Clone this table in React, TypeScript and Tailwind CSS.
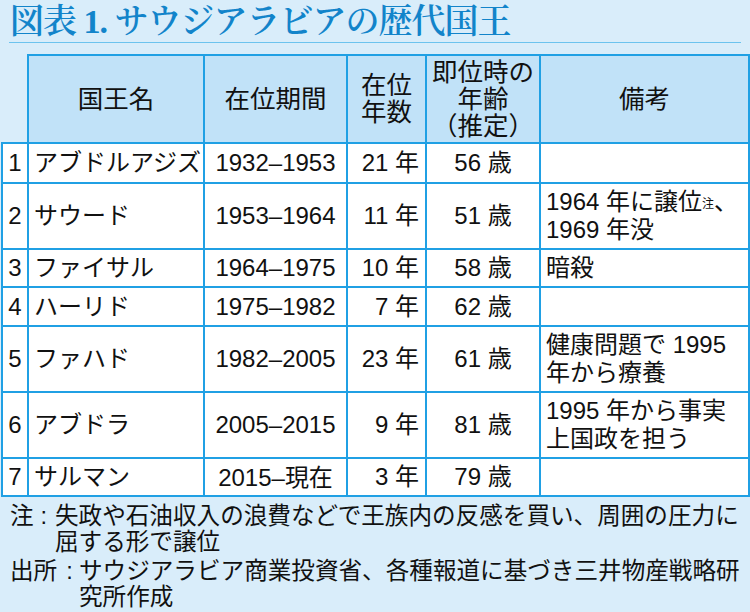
const rows = [
  { n: '1', name: 'アブドルアジズ', period: '1932–1953', years: '21 年', age: '56 歳', note: null, h: 'h-[40px]' },
  { n: '2', name: 'サウード', period: '1953–1964', years: '11 年', age: '51 歳', note: 'saud', h: 'h-[66px]' },
  { n: '3', name: 'ファイサル', period: '1964–1975', years: '10 年', age: '58 歳', note: '暗殺', h: 'h-[38px]' },
  { n: '4', name: 'ハーリド', period: '1975–1982', years: '7 年', age: '62 歳', note: null, h: 'h-[39px]' },
  { n: '5', name: 'ファハド', period: '1982–2005', years: '23 年', age: '61 歳', note: ['健康問題で 1995', '年から療養'], h: 'h-[66px]' },
  { n: '6', name: 'アブドラ', period: '2005–2015', years: '9 年', age: '81 歳', note: ['1995 年から事実', '上国政を担う'], h: 'h-[66px]' },
  { n: '7', name: 'サルマン', period: '2015–', years: '3 年', age: '79 歳', note: null, h: 'h-[38px]', tail: '現在' },
];

// cell border shared by header and body
const cell = 'border-2 border-[#20a0e4] p-0 align-middle';
const jp = "font-['Noto_Sans_CJK_JP',sans-serif]";
const latin = "font-['Liberation_Sans',Arial,sans-serif]";

function Note({ note }: { note: (typeof rows)[number]['note'] }) {
  if (!note) return null;
  if (note === 'saud') {
    return (
      <>
        1964 年に譲位<sup className="text-[12px] relative -top-[2px]">注</sup>、
        <br />
        1969 年没
      </>
    );
  }
  if (Array.isArray(note)) {
    return (
      <>
        {note[0]}
        <br />
        {note[1]}
      </>
    );
  }
  return <>{note}</>;
}

export default function App() {
  return (
    <div className="w-[750px] h-[612px] overflow-hidden bg-[#d9edfa] text-[#111] font-['Liberation_Sans','Noto_Sans_CJK_JP',sans-serif]">
      {/* title */}
      <div className="mx-[9px] h-[43px] border-b-[1.5px] border-[#6cc3ee] pt-[3px]">
        <h1 className="pl-[1px] text-[34px] leading-[38px] tracking-[-1px] font-semibold text-[#1284ca] whitespace-nowrap font-['Liberation_Serif','Noto_Serif_CJK_JP','Noto_Sans_CJK_JP',serif]">
          図表 1. サウジアラビアの歴代国王
        </h1>
      </div>

      <table className="mt-[11px] ml-[1px] w-[749px] table-fixed border-collapse">
        <colgroup>
          <col className="w-[26px]" />
          <col className="w-[176px]" />
          <col className="w-[143px]" />
          <col className="w-[79px]" />
          <col className="w-[114px]" />
          <col className="w-[209px]" />
        </colgroup>
        <thead>
          <tr className="h-[88px] text-[25.5px] leading-[27px] font-normal">
            <th className="p-0" />
            <th className={`${cell} bg-[#c1e2f8] font-normal`}>国王名</th>
            <th className={`${cell} bg-[#c1e2f8] font-normal`}>在位期間</th>
            <th className={`${cell} bg-[#c1e2f8] font-normal`}>
              在位
              <br />
              年数
            </th>
            <th className={`${cell} bg-[#c1e2f8] font-normal whitespace-nowrap`}>
              即位時の
              <br />
              年齢
              <br />
              （推定）
            </th>
            <th className={`${cell} bg-[#c1e2f8] font-normal`}>備考</th>
          </tr>
        </thead>
        <tbody className="bg-white text-[24px] leading-[28px]">
          {rows.map((r) => (
            <tr key={r.n} className={r.h}>
              <td className={`${cell} text-center`}>{r.n}</td>
              <td className={`${cell} pl-[5px] whitespace-nowrap`}>{r.name}</td>
              <td className={`${cell} text-center whitespace-nowrap`}>
                <span className={latin}>{r.period}</span>
                {r.tail && <span className={jp}>{r.tail}</span>}
              </td>
              <td className={`${cell} text-right pr-[6px] whitespace-nowrap`}>{r.years}</td>
              <td className={`${cell} text-center whitespace-nowrap`}>{r.age}</td>
              <td className={`${cell} pl-[5px] whitespace-nowrap`}>
                <Note note={r.note} />
              </td>
            </tr>
          ))}
        </tbody>
      </table>

      {/* footnotes */}
      <div className="mt-[6px] text-[23.6px] leading-[26px] whitespace-nowrap">
        <div className="flex">
          <div className="w-[55px] shrink-0 pl-[10px]">
            注<span className="ml-[7px]">:</span>
          </div>
          <div>
            失政や石油収入の浪費などで王族内の反感を買い、周囲の圧力に
            <br />
            屈する形で譲位
          </div>
        </div>
        <div className="flex mt-[3px]">
          <div className="w-[79px] shrink-0 pl-[10px]">
            出所<span className="ml-[9px]">:</span>
          </div>
          <div>
            サウジアラビア商業投資省、各種報道に基づき三井物産戦略研
            <br />
            究所作成
          </div>
        </div>
      </div>
    </div>
  );
}
